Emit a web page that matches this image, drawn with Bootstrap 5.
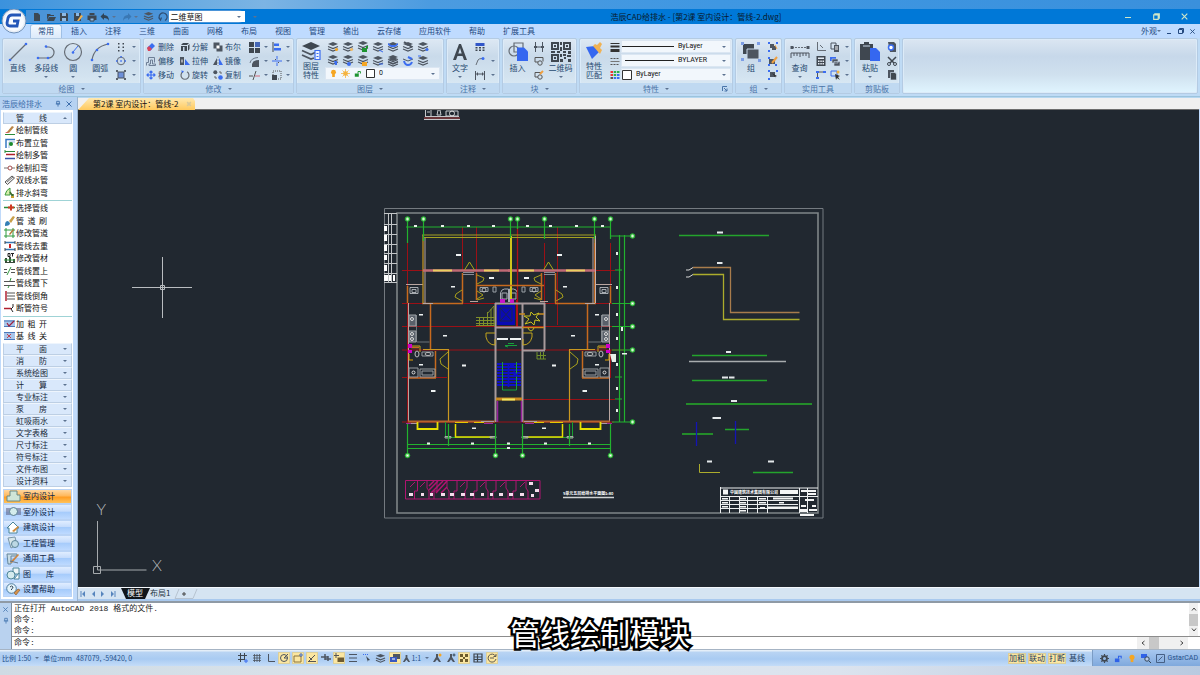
<!DOCTYPE html>
<html lang="zh-CN">
<head>
<meta charset="utf-8">
<meta name="viewport" content="width=device-width, initial-scale=1">
<title>浩辰CAD给排水</title>
<link href="https://cdn.jsdelivr.net/npm/bootstrap@5.3.0/dist/css/bootstrap.min.css" rel="stylesheet">
<style>
body{font-family:"Noto Sans CJK SC","Noto Sans",sans-serif;font-size:8px;line-height:10px;color:#26496f;background:#bfdbff;min-height:100vh;overflow-x:hidden}
svg{display:block;flex:none}
button,select,input{font:inherit;color:inherit}
.tool{background:none;border:0;padding:0;display:flex;align-items:center;justify-content:center;white-space:nowrap;line-height:10px}
.dn{display:inline-block;border:2px solid transparent;border-top-color:#5c7290;border-bottom:0;width:0;height:0;flex:none}
.desk-top{height:9px;background:linear-gradient(90deg,#3b92dd,#5fa6e0 12%,#7cb4e4 22%,#4b9be0 36%,#3f97e2 60%,#3a90dc)}
.desk-bottom{height:9px;background:linear-gradient(90deg,#cfdbe4,#dfe7ee 45%,#dbe3ee 70%,#b9cae0)}
.titlebar{height:15px;background:#0078d7;color:#08182c;padding-right:2px}
.doctitle{left:58%;transform:translateX(-50%);white-space:nowrap}
.quick{height:13px;background:#4b94d8;border-radius:0 7px 7px 0;margin-left:26px;padding-left:4px;width:219px}
.quick .tool{width:14px}
.quick select{width:77px;height:11px;background:#fff;border:0;appearance:none;padding:0 1px;color:#111;line-height:11px}
.wscaret{margin-left:-8px;margin-right:4px}
.winbtns .tool{width:28px;height:15px;color:#cfe6c8}
.logo{left:1px;top:0;z-index:5}
.tabs{height:14px;background:#bfdbff;color:#24497f;padding-left:28px}
.tabs a{display:block;color:inherit;text-decoration:none;padding:1px 9px 0;height:14px;line-height:12px}
.tabs a.active{background:linear-gradient(#f4f9ff,#dceafa);border:1px solid #9fc0e6;border-bottom:0;border-radius:3px 3px 0 0;margin:0 0 0 2px;padding:0 7px}
.ribbon{height:59px;padding:0 2px 2px;gap:2px;background:#bfdbf5;border-bottom:1px solid #9cc4dd}
.panel{flex:none;height:56px;border:1px solid #b4cbe3;border-radius:2px;background:linear-gradient(#dde8f3,#c9daea 32%,#d3e3f0 70%,#dfeef8);overflow:hidden;box-shadow:0 0 0 1px #dcebf8 inset}
.panel.rest{background:linear-gradient(#dbe6f2,#c7d8ea 32%,#cfe0ee 65%,#e0f5ff);flex:1 1 0}
.pbody{height:44px;padding-top:1px}
.ptitle{height:11px;background:#c0d9f1;color:#4a74a8;line-height:10px;gap:6px}
.big{flex-direction:column;justify-content:flex-start;height:42px;gap:1px;padding-top:2px}
.big .dn{margin-top:2px}
.two{gap:0;padding-top:1px}
.lb{display:block;line-height:9px;height:9px}
.rows3{display:grid;grid-template-rows:repeat(3,14px)}
.g2{grid-template-columns:14px 12px}
.mod{grid-template-columns:34px 33px 34px 14px 9px 14px 8px;padding-left:2px}
.mod .lab{justify-content:flex-start;gap:2px}
.lay .tool{width:15px;height:14px}
.lay2 .tool{height:13px}
.box{background:#f2f7fc;border:1px solid #dbe6f2;height:13px;color:#111;font-family:Roboto,"Noto Sans",sans-serif;font-size:7px;line-height:11px}
.box select{appearance:none;background:none;border:0;padding:0;height:11px;line-height:11px;flex:1;min-width:0}
.side{width:78px;flex:none;background:#c0dafa;border-right:1px solid #9bb4cf}
.shead{height:13px;color:#3d6eac;padding:0 4px 0 2px;background:#b6d2f2}
.sbody{background:#fff;margin:0 4px 2px 1px;padding:2px 1px 2px 2px;flex:1}
.sbody button{border:0;background:none;color:#111;padding:0;display:flex;align-items:center;text-align:left;white-space:nowrap}
.sbody .it{flex:1 1 12px;min-height:12px;line-height:12px;padding-left:1px}
.sbody .hd{flex:0 0 12px;background:#d9e8fb;border:1px solid #bdcfe4;border-top-color:#eef5fd;padding:0 4px 0 12px;justify-content:space-between;line-height:10px;color:#182838}
.sbody .hd.last{margin-bottom:2px}
.sbody .cat{flex:1 1 15px;min-height:15px;background:linear-gradient(#e0edff,#c5dcfc 45%,#a5cbfb 50%,#bedaff);border:1px solid #b9d3f5;padding-left:2px;gap:1px;color:#10284c}
.sbody .cat.active{background:linear-gradient(#ffd7a0,#ffb85c 45%,#ff9d23 55%,#ffc25a)}
.up{border-top:0;border-bottom:2px solid #5c7290}
.wd{width:31px;display:inline-block;text-align:justify;text-align-last:justify}
.sep{flex:0 0 1px;background:#9fd3d6;margin:1px 0}
.docbar{height:12px;background:#f0f0f0;border-top:1px solid #b7d7f0}
.doctab{height:12px;width:117px;background:linear-gradient(#ffe9b0,#ffc95d);clip-path:polygon(0 100%,11px 0,115px 0,117px 3px,117px 100%);color:#111;padding-left:15px;gap:8px}
.canvas{flex:1 1 0;min-height:0;background:#212830;overflow:hidden;border-top:1px solid #6d6d6d;margin-right:1px}
.canvas svg{width:100%;height:100%}
.laybar{height:14px;background:#d5e4f2;border-top:1px solid #f4f8fc;border-bottom:2px solid #a9c9ee;color:#26343f}
.laybar .tool{width:10px;color:#5785bd;height:11px}
.laytab{height:11px;text-decoration:none;color:#26343f;line-height:10px}
.laytab.active{background:#10151a;color:#fff;clip-path:polygon(0 0,100% 0,24px 100%,5px 100%);width:29px;padding:0 6px;margin-left:3px}
.cmd{background:#fff;border-top:2px solid #8f9aa5;color:#222;font-family:"Liberation Mono","Noto Sans CJK SC",monospace;font-size:8px}
.cmdgrip{width:12px;background:#b9d2ef;border-right:1px solid #7f8d9c;color:#4d7db5;padding-top:3px;gap:4px}
.cmd .logline{height:11px;line-height:11px;padding-left:2px}
.cmdin{border-top:1px solid #8c8c8c;height:13px;padding-left:2px}
.cmdin input{border:0;outline:0;height:11px;padding:0;min-width:0}
.sb{background:#f0f0f0;color:#444}
.vsb{width:9px;margin-right:2px}
.hsb{width:51px;margin-right:12px}
.thumb{background:#c8c8c8}
.status{height:17px;background:linear-gradient(#e4eef8 0 1px,#b9d4f3 2px,#a9cbf2 9px,#c4dcf8);border-top:1px solid #a6b4c4;font-size:7px;color:#24508a}
.status .txt{width:233px;padding-left:2px;gap:4px}
.stools{width:265px}
.stools .tool{height:12px;min-width:12px}
.stools .on,.tog.on{background:#fbe6a0;box-shadow:0 0 0 1px #dbcf9c inset}
.togs{gap:2px;margin-right:6px}
.tog{font-size:8px;width:18px;height:11px;color:#26405f}
.sright{background:linear-gradient(#a8c8ef,#7fa9dd);border-left:1px solid #7b9cc4;width:108px;padding:0 2px 0 4px}
.sright .tool{width:14px}
.brandname{font-family:Roboto,sans-serif}
.caption{left:0;right:0;bottom:26px;font-size:30px;line-height:34px;color:#fff;-webkit-text-stroke:5px #000;paint-order:stroke fill;text-align:center;pointer-events:none;font-weight:400}
</style>
</head>
<body class="d-flex flex-column position-relative">

<svg width="0" height="0" class="position-absolute" aria-hidden="true">
<defs>
<symbol id="layer" viewBox="0 0 12 12"><path d="M1 3 6 1l5 2-5 2z" fill="#4d5560"/><path d="M1 5.500 6 7.500l5-2M1 8 6 10l5-2" fill="none" stroke="#4d5560" stroke-width="1.200"/></symbol>
<symbol id="person" viewBox="0 0 10 10"><path d="M4 1h2v3l3 5H7L5 6.500 3 9H1l3-5z" fill="#4d5560"/></symbol>
<symbol id="win" viewBox="0 0 8 8"><path d="M2.500 2.500v-1h4v4h-1M1.500 2.500h4v4h-4z" fill="none" stroke="currentColor"/></symbol>
<symbol id="ex" viewBox="0 0 8 8"><path d="M1.500 1.500l5 5M6.500 1.500l-5 5" fill="none" stroke="currentColor"/></symbol>
<symbol id="pin" viewBox="0 0 6 8"><path d="M1.500 1.500h3v3h-3zM.5 4.500h5M3 5v2.500" fill="none" stroke="currentColor"/></symbol>
<symbol id="lock" viewBox="0 0 10 10"><path d="M1 5h5v4H1z" fill="currentColor"/><path d="M5 5V2.500h3V5" fill="none" stroke="currentColor" stroke-width="1.200"/></symbol>
<symbol id="bulb" viewBox="0 0 8 10"><circle cx="4" cy="3.500" r="2.800" fill="#f5a623"/><path d="M2.500 5h3v4h-3z" fill="#f5a623"/></symbol>
</defs>
</svg>

<div class="desk-top"></div>

<header class="titlebar d-flex align-items-center position-relative">
  <svg class="logo position-absolute" width="26" height="26" viewBox="0 0 26 26"><circle cx="13" cy="12" r="12" fill="#e8eef6" stroke="#6e8fb8"/><circle cx="13" cy="12" r="10" fill="#f9fbff"/><path d="M20 6H11Q8 6 7 9l-1 5q0 3 3 3h7l1-5h-5" fill="none" stroke="#2356b8" stroke-width="2.800"/></svg>
  <div class="quick d-flex align-items-center">
    <button class="tool" aria-label="新建"><svg width="10" height="10" viewBox="0 0 10 10"><path d="M2 1h4l2 2v6H2z" fill="#3c4752"/></svg></button>
    <button class="tool" aria-label="打开"><svg width="10" height="10" viewBox="0 0 10 10"><path d="M1 2h3l1 1h3v1H3L1 8z M3 5h7L8 9H1z" fill="#3c4752"/></svg></button>
    <button class="tool" aria-label="保存"><svg width="10" height="10" viewBox="0 0 10 10"><path d="M1 1h7l1 1v7H1z" fill="#3c4752"/><path d="M3 1h4v3H3zM3 6h4v3H3z" fill="#8db9e4"/></svg></button>
    <button class="tool" aria-label="另存为"><svg width="10" height="10" viewBox="0 0 10 10"><path d="M1 1h7v8H1z" fill="#3c4752"/><path d="M3 1h3v3H3z" fill="#8db9e4"/><path d="M4 9l4-6 2 1-4 5z" fill="#f0b04c"/></svg></button>
    <button class="tool" aria-label="打印"><svg width="10" height="10" viewBox="0 0 10 10"><path d="M2.500 1h5v2h-5zM.5 3.500h9V8h-9z" fill="#3c4752"/><path d="M3 6h4v3H3z" fill="#8db9e4" stroke="#3c4752"/></svg></button>
    <button class="tool" aria-label="撤销"><svg width="10" height="10" viewBox="0 0 10 10"><path d="M4 1v2q5 0 5 6Q8 6 4 6v2L.5 4.500z" fill="#2f4356"/></svg></button>
    <i class="dn me-1"></i>
    <button class="tool" aria-label="重做"><svg width="10" height="10" viewBox="0 0 10 10"><path d="M6 1v2Q1 3 1 9q1-3 5-3v2l3.500-3.500z" fill="#3a78b4"/></svg></button>
    <i class="dn me-1"></i>
    <button class="tool" aria-label="图层"><svg width="11" height="11"><use href="#layer"/></svg></button>
    <button class="tool" aria-label="刷新"><svg width="10" height="10" viewBox="0 0 10 10"><path d="M2.500 8A4 4 0 1 1 7 8.500M.5 5.500l2 2.500 1-2.500" fill="none" stroke="#2d4d73" stroke-width="1.200"/></svg></button>
    <select aria-label="工作空间"><option>二维草图</option></select><i class="dn wscaret"></i>
  </div>
  <i class="dn ms-2"></i>
  <div class="doctitle position-absolute">浩辰CAD给排水 - [第2课 室内设计：管线-2.dwg]</div>
  <div class="winbtns d-flex ms-auto">
    <button class="tool" aria-label="最小化"><svg width="8" height="8" viewBox="0 0 8 8"><path d="M1 4.500h6" stroke="currentColor"/></svg></button>
    <button class="tool" aria-label="还原"><svg width="9" height="9"><use href="#win"/></svg></button>
    <button class="tool" aria-label="关闭"><svg width="9" height="9"><use href="#ex"/></svg></button>
  </div>
</header>

<nav class="tabs d-flex align-items-center">
  <a href="#" class="active">常用</a><a href="#">插入</a><a href="#">注释</a><a href="#">三维</a><a href="#">曲面</a><a href="#">网格</a><a href="#">布局</a><a href="#">视图</a><a href="#">管理</a><a href="#">输出</a><a href="#">云存储</a><a href="#">应用软件</a><a href="#">帮助</a><a href="#">扩展工具</a>
  <div class="d-flex ms-auto align-items-center gap-1 pe-1">
    <button class="tool">外观<i class="dn"></i></button>
    <button class="tool" aria-label="最小化文档"><svg width="8" height="8" viewBox="0 0 8 8"><path d="M2 6.500h4" stroke="currentColor"/></svg></button>
    <button class="tool" aria-label="还原文档"><svg width="8" height="8"><use href="#win"/></svg></button>
    <button class="tool" aria-label="关闭文档"><svg width="7" height="7"><use href="#ex"/></svg></button>
  </div>
</nav>

<section class="ribbon d-flex">
  <div class="panel" style="width:139px">
    <div class="pbody d-flex">
      <button class="tool big" style="width:30px"><svg width="20" height="20" viewBox="0 0 20 20"><path d="M2 18 18 2" stroke="#666d76" stroke-width="1.200"/><circle cx="2" cy="18" r="1.300" fill="#3b6df0"/><circle cx="18" cy="2" r="1.300" fill="#3b6df0"/></svg>直线</button>
      <button class="tool big" style="width:28px"><svg width="20" height="20" viewBox="0 0 20 20"><path d="M2 16h10a5 5 0 0 0 1-11h-3" fill="none" stroke="#666d76" stroke-width="1.200"/><circle cx="2" cy="16" r="1.300" fill="#3b6df0"/><circle cx="12" cy="16" r="1.300" fill="#3b6df0"/><circle cx="10" cy="4.500" r="1.300" fill="#3b6df0"/></svg>多段线<i class="dn"></i></button>
      <button class="tool big" style="width:27px"><svg width="20" height="20" viewBox="0 0 20 20"><circle cx="10" cy="10" r="8.500" fill="none" stroke="#666d76" stroke-width="1.200"/><path d="M10 10l5-6" stroke="#3b6df0"/><circle cx="10" cy="10.500" r="1.300" fill="#3b6df0"/></svg>圆<i class="dn"></i></button>
      <button class="tool big" style="width:28px"><svg width="20" height="20" viewBox="0 0 20 20"><path d="M2 18Q4 5 18 2" fill="none" stroke="#666d76" stroke-width="1.200"/><circle cx="2" cy="18" r="1.300" fill="#3b6df0"/><circle cx="7" cy="8" r="1.300" fill="#3b6df0"/><circle cx="18" cy="2" r="1.300" fill="#3b6df0"/></svg>圆弧<i class="dn"></i></button>
      <div class="rows3 g2">
        <button class="tool" aria-label="点"><svg width="10" height="10" viewBox="0 0 10 10"><path d="M2 1h1.500v1.500H2zM6.500 1H8v1.500H6.500zM2 4.500h1.500V6H2zM6.500 4.500H8V6H6.500zM2 8h1.500v1.500H2zM6.500 8H8v1.500H6.500z" fill="#3f4750"/></svg></button><button class="tool" aria-label="更多点"><i class="dn"></i></button>
        <button class="tool" aria-label="椭圆"><svg width="10" height="10" viewBox="0 0 10 10"><circle cx="5" cy="5" r="3.800" fill="none" stroke="#666d76"/><path d="M4.300 4.300h1.500v1.500H4.300zM0 4.300h1.500v1.500H0zM8.500 4.300H10v1.500H8.500zM4.300 0h1.500v1.500H4.300z" fill="#3b6df0"/></svg></button><button class="tool" aria-label="更多椭圆"><i class="dn"></i></button>
        <button class="tool" aria-label="填充"><svg width="10" height="10" viewBox="0 0 10 10"><path d="M2 2h6v6H2z" fill="#6d8fd8" stroke="#4d5560"/><path d="M0 0h2v2H0zM8 0h2v2H8zM0 8h2v2H0zM8 8h2v2H8z" fill="#5b626b"/></svg></button><button class="tool" aria-label="更多填充"><i class="dn"></i></button>
      </div>
    </div>
    <div class="ptitle d-flex align-items-center justify-content-center">绘图<i class="dn"></i></div>
  </div>

  <div class="panel" style="width:151px">
    <div class="pbody"><div class="rows3 mod">
      <button class="tool lab"><svg width="10" height="10" viewBox="0 0 10 10"><path d="M1 6l5-5 3 3-5 5z" fill="#3b6df0"/><path d="M1 6l2-2 3 3-2 2H2z" fill="#d9465c"/></svg>删除</button>
      <button class="tool lab"><svg width="10" height="10" viewBox="0 0 10 10"><path d="M1 3l2-2h6l-2 2zM1 4h6v5H1zM8 3.500l1.500-1.500v5L8 9z" fill="#3f4750"/><path d="M3 5h1.500v4H3z" fill="#c9d9ea"/></svg>分解</button>
      <button class="tool lab"><svg width="10" height="10" viewBox="0 0 10 10"><path d="M.5.500h6v6h-6z" fill="#4d5560"/><path d="M3.500 3.500h6v6h-6z" fill="#4d5560"/><path d="M3.500 3.500h3v3h-3z" fill="#fff"/></svg>布尔</button>
      <button class="tool" aria-label="阵列"><svg width="11" height="11" viewBox="0 0 11 11"><path d="M0 0h5v5H0zM6 6h5v5H6zM0 6h5v5H0z" fill="#3f4750"/><path d="M6 0h5v5H6z" fill="#4668b8"/></svg></button><button class="tool" aria-label="更多阵列"><i class="dn"></i></button>
      <button class="tool" aria-label="对齐"><svg width="10" height="10" viewBox="0 0 10 10"><path d="M1 0v10" stroke="#3f4750"/><path d="M2 1.500h5V4H2zM2 6h7v2.500H2z" fill="#3b6df0"/></svg></button><button class="tool" aria-label="更多对齐"><i class="dn"></i></button>
      <button class="tool lab"><svg width="10" height="10" viewBox="0 0 10 10"><path d="M.5 9.500V6.500h2v-5h6v5M3 9.500V8h1.500V4h2v4h3v1.500z" fill="none" stroke="#6e7f96"/></svg>偏移</button>
      <button class="tool lab"><svg width="10" height="10" viewBox="0 0 10 10"><path d="M0 1h4v8H0z" fill="#4d5560"/><path d="M1.500 3.500h1v3h-1z" fill="#fff"/><path d="M5 3l5 6H5z" fill="#3b6df0"/></svg>拉伸</button>
      <button class="tool lab"><svg width="10" height="10" viewBox="0 0 10 10"><path d="M4 2v7H0z" fill="#4d5560"/><path d="M5 0v10" stroke="#8a96a5" stroke-dasharray="2 1"/><path d="M6 2v7h4z" fill="#3b6df0"/></svg>镜像</button>
      <button class="tool" aria-label="圆角"><svg width="11" height="11" viewBox="0 0 11 11"><path d="M3 11V8q1-4 7-4v7z" fill="#4d5560"/><path d="M1 7Q2 2 9 1.500" stroke="#6a7686" fill="none"/></svg></button><button class="tool" aria-label="更多圆角"><i class="dn"></i></button>
      <button class="tool" aria-label="打断"><svg width="10" height="10" viewBox="0 0 10 10"><path d="M5 0v3.500M5 6.500V10M0 5h10" stroke="#3b6df0"/><path d="M3 3l1 1M7 7l-1-1" stroke="#555"/></svg></button><button class="tool" aria-label="更多打断"><i class="dn"></i></button>
      <button class="tool lab"><svg width="10" height="10" viewBox="0 0 10 10"><path d="M5 1v8M1 5h8M3.500 2.500 5 1l1.500 1.500M3.500 7.500 5 9l1.500-1.500M2.500 3.500 1 5l1.500 1.500M7.500 3.500 9 5 7.500 6.500" fill="none" stroke="#3b6df0" stroke-width="1.200"/></svg>移动</button>
      <button class="tool lab"><svg width="10" height="10" viewBox="0 0 10 10"><path d="M3 1.800A4 4 0 1 0 7 1.800" fill="none" stroke="#666d76" stroke-width="1.200"/><path d="M1 .5l3 .5-1.500 2z" fill="#3b6df0"/></svg>旋转</button>
      <button class="tool lab"><svg width="10" height="10" viewBox="0 0 10 10"><circle cx="2.300" cy="2.300" r="2" fill="#4d5560"/><circle cx="7.500" cy="7.500" r="2.300" fill="#3b6df0"/><path d="M6 2h2v2M2 6v2h2" fill="none" stroke="#666"/></svg>复制</button>
      <button class="tool" aria-label="修剪"><svg width="11" height="11" viewBox="0 0 11 11"><path d="M0 6h4M4 10l3-9" stroke="#555" fill="none"/><path d="M6 6h5" stroke="#d46b78"/></svg></button><button class="tool" aria-label="更多修剪"><i class="dn"></i></button>
      <button class="tool" aria-label="缩放"><svg width="10" height="10" viewBox="0 0 10 10"><path d="M1 1h8v8H1z" fill="none" stroke="#555" stroke-dasharray="1 1"/><path d="M0 5h5v5H0z" fill="#3f4750"/></svg></button><button class="tool" aria-label="更多缩放"><i class="dn"></i></button>
    </div></div>
    <div class="ptitle d-flex align-items-center justify-content-center">修改<i class="dn"></i></div>
  </div>

  <div class="panel" style="width:148px">
    <div class="pbody d-flex">
      <button class="tool big two" style="width:28px"><svg width="22" height="20" viewBox="0 0 22 20"><path d="M2 5l9-4 9 4-9 4z" fill="#3f4750"/><path d="M2 9.500l9 4 4-2M2 14l9 4 3-1" fill="none" stroke="#4d5560" stroke-width="1.800"/><path d="M15 9.500h5v9h-5z" fill="#eaf2ff" stroke="#3b6df0" stroke-width="1.200"/><path d="M16.500 12.500h2M16.500 15.500h2" stroke="#3b6df0"/></svg><span class="lb">图层</span><span class="lb">特性</span></button>
      <div>
        <div class="d-flex lay">
          <button class="tool" aria-label="关闭图层"><svg width="12" height="12" viewBox="0 0 12 12"><use href="#layer"/><circle cx="9.500" cy="8.500" r="1.500" fill="#f5a623"/></svg></button>
          <button class="tool" aria-label="冻结图层"><svg width="12" height="12" viewBox="0 0 12 12"><use href="#layer"/><circle cx="9.500" cy="8.500" r="1.500" fill="#f2bd67"/></svg></button>
          <button class="tool" aria-label="锁定图层"><svg width="12" height="12" viewBox="0 0 12 12"><use href="#layer" y="-1"/><path d="M5 7h5v4H5zM9 7V5h2v2" fill="#1c9430"/></svg></button>
          <button class="tool" aria-label="置为当前"><svg width="12" height="12" viewBox="0 0 12 12"><use href="#layer"/><path d="M7 9l4 2" stroke="#3b6df0"/></svg></button>
          <button class="tool" aria-label="图层合并"><svg width="12" height="12" viewBox="0 0 12 12"><use href="#layer"/><path d="M1 2l3 2h4l3-2v2L8 6H4L1 4z" fill="#3b6df0"/></svg></button>
          <button class="tool" aria-label="图层匹配"><svg width="12" height="12" viewBox="0 0 12 12"><use href="#layer"/><path d="M2 1l8 5" stroke="#4d5560" stroke-width="2"/></svg></button>
          <button class="tool" aria-label="图层浏览"><svg width="12" height="12" viewBox="0 0 12 12"><use href="#layer"/><circle cx="10" cy="8.500" r="1.500" fill="#3b6df0"/></svg></button>
        </div>
        <div class="d-flex lay lay2">
          <button class="tool" aria-label="打开图层"><svg width="12" height="12" viewBox="0 0 12 12"><use href="#layer" y="-1"/><path d="M7 6h3v4H8z" fill="#3b6df0"/></svg></button>
          <button class="tool" aria-label="解冻图层"><svg width="12" height="12" viewBox="0 0 12 12"><use href="#layer" y="-1"/><circle cx="7" cy="9" r="2" fill="#3b6df0"/></svg></button>
          <button class="tool" aria-label="解锁图层"><svg width="12" height="12" viewBox="0 0 12 12"><use href="#layer" y="-1"/><path d="M5 7h5v4H5z" fill="#f5a623"/></svg></button>
          <button class="tool" aria-label="上一图层"><svg width="12" height="12" viewBox="0 0 12 12"><use href="#layer"/><path d="M7 9h4" stroke="#3b6df0"/></svg></button>
          <button class="tool" aria-label="图层漫游"><svg width="12" height="12" viewBox="0 0 12 12"><use href="#layer" y="-1"/><use href="#layer" y="1"/></svg></button>
          <button class="tool" aria-label="图层删除"><svg width="12" height="12" viewBox="0 0 12 12"><path d="M1 4l5 2 5-2" fill="none" stroke="#4d5560"/><path d="M2 6q1 4 4 4t4-3M6 2l4 2" fill="none" stroke="#3b6df0" stroke-width="2"/></svg></button>
          <button class="tool" aria-label="图层状态"><svg width="12" height="12" viewBox="0 0 12 12"><use href="#layer"/><path d="M1 1h3" stroke="#3b6df0"/></svg></button>
        </div>
        <div class="box d-flex align-items-center gap-1 ps-1 pe-1" style="width:115px">
          <svg width="7" height="9"><use href="#bulb"/></svg>
          <svg width="9" height="9" viewBox="0 0 9 9"><circle cx="4.500" cy="4.500" r="2.300" fill="#f5a623"/><path d="M4.500 0v9M0 4.500h9M1.500 1.500l6 6M7.500 1.500l-6 6" stroke="#f5b645" stroke-width=".8"/></svg>
          <svg width="8" height="9" style="color:#1c9430"><use href="#lock"/></svg>
          <svg width="9" height="9" viewBox="0 0 9 9"><path d="M.5.500h8v8h-8z" fill="#fff" stroke="#333"/></svg>
          <select aria-label="当前图层"><option>0</option></select><i class="dn"></i>
        </div>
      </div>
    </div>
    <div class="ptitle d-flex align-items-center justify-content-center">图层<i class="dn"></i></div>
  </div>

  <div class="panel" style="width:54px">
    <div class="pbody d-flex">
      <button class="tool big" style="width:28px"><svg width="16" height="20" viewBox="0 0 16 20"><path d="M1 18 7 2h2l6 16h-3l-1.500-4h-5L4 18zM6.300 11.500h3.400L8 6z" fill="#3f4750"/></svg>文字<i class="dn"></i></button>
      <div class="rows3 g2">
        <button class="tool" aria-label="表格"><svg width="10" height="10" viewBox="0 0 10 10"><path d="M.5 1h9v3h-9z" fill="#3156c8"/><path d="M.5 5h2v1.500h-2zM4 5h2v1.500H4zM7.500 5h2v1.500h-2zM.5 7.500h2V9h-2zM4 7.500h2V9H4zM7.500 7.500h2V9h-2z" fill="#3f4750"/></svg></button><span></span>
        <button class="tool" aria-label="引线"><svg width="10" height="10" viewBox="0 0 10 10"><path d="M1 9l2-5q1-1.500 4-1.500" fill="none" stroke="#666d76"/><circle cx="8" cy="2.500" r="1.500" fill="#3b6df0"/></svg></button><button class="tool" aria-label="更多引线"><i class="dn"></i></button>
        <button class="tool" aria-label="标注"><svg width="10" height="10" viewBox="0 0 10 10"><path d="M.5 1v9M9.500 1v9M1 4h8" stroke="#4d5560"/><path d="M2.500 2.500v3M7.500 2.500v3" stroke="#4d5560"/></svg></button><button class="tool" aria-label="更多标注"><i class="dn"></i></button>
      </div>
    </div>
    <div class="ptitle d-flex align-items-center justify-content-center">注释<i class="dn"></i></div>
  </div>

  <div class="panel" style="width:75px">
    <div class="pbody d-flex">
      <button class="tool big" style="width:29px"><svg width="20" height="20" viewBox="0 0 20 20"><circle cx="6" cy="9" r="5" fill="none" stroke="#666d76" stroke-width="1.200"/><path d="M6 1h9v9H6z" fill="none" stroke="#666d76" stroke-width="1.200"/><path d="M9 5.500h7l4 4V19H9z" fill="#3567f0"/></svg>插入</button>
      <div class="rows3" style="width:13px">
        <button class="tool" aria-label="创建块"><svg width="10" height="10" viewBox="0 0 10 10"><path d="M1.500 0v10M8.500 0v10M3 5h4" stroke="#4d5560"/><path d="M0 4h3v2H0zM7 4h3v2H7z" fill="#4d5560"/></svg></button>
        <button class="tool" aria-label="编辑块"><svg width="10" height="10" viewBox="0 0 10 10"><path d="M1 1.500h8v4M1 1.500V6h3" fill="none" stroke="#555"/><circle cx="6" cy="7" r="2.200" fill="none" stroke="#555"/></svg></button>
        <button class="tool" aria-label="块属性"><svg width="10" height="10" viewBox="0 0 10 10"><path d="M1 2.500h6M1 2.500V7h3" fill="none" stroke="#555"/><circle cx="6" cy="7" r="2.200" fill="none" stroke="#555"/><path d="M6 4l3-3" stroke="#f0a040" stroke-width="2"/></svg></button>
      </div>
      <button class="tool big" style="width:31px"><svg width="20" height="20" viewBox="0 0 20 20"><path d="M1 1h6v6H1zM13 1h6v6h-6zM1 13h6v6H1z" fill="none" stroke="#3f4750" stroke-width="2"/><path d="M3 3h2v2H3zM15 3h2v2h-2zM3 15h2v2H3zM9 0h2v3H9zM9 5h2v4H9zM0 9h4v2H0zM6 9h3v2H6zM12 9h3v2h-3zM17 9h3v3h-3zM9 12h2v3H9zM9 17h3v3H9zM12 12h3v2h-3zM13 15h2v2h-2zM16 13h4v2h-4zM17 17h3v3h-3z" fill="#3f4750"/></svg>二维码<i class="dn"></i></button>
    </div>
    <div class="ptitle d-flex align-items-center justify-content-center">块<i class="dn"></i></div>
  </div>

  <div class="panel" style="width:154px">
    <div class="pbody d-flex">
      <button class="tool big two" style="width:28px"><svg width="20" height="20" viewBox="0 0 20 20"><path d="M2 6l9-1 4 6-7 7z" fill="#3567f0"/><path d="M9 5l2-2 2 1 3-3 2 2-2 4 2 2-2 4z" fill="#f0b254"/></svg><span class="lb">特性</span><span class="lb">匹配</span></button>
      <div class="rows3" style="width:13px">
        <button class="tool" aria-label="线宽"><svg width="10" height="10" viewBox="0 0 10 10"><path d="M.5 1.500h9" stroke="#333"/><path d="M.5 4.500h9" stroke="#333" stroke-width="2"/><path d="M.5 8.500h9" stroke="#333" stroke-width="3"/></svg></button>
        <button class="tool" aria-label="线型"><svg width="10" height="10" viewBox="0 0 10 10"><path d="M.5 2.500h9M.5 8.500h9" stroke="#555" stroke-dasharray="2 1"/><path d="M.5 5.500h9" stroke="#777"/></svg></button>
        <button class="tool" aria-label="颜色"><svg width="10" height="10" viewBox="0 0 10 10"><path d="M.5 1h2.500v2H.500zM.5 4h2.500v2H.500z" fill="#e33"/><path d="M3.700 1h2.500v2H3.700zM7 1h2.500v2H7zM3.700 4h2.500v2H3.700z" fill="#2eae4a"/><path d="M.5 7h2.500v2H.500z" fill="#555"/><path d="M3.700 7h2.500v2H3.700zM7 4h2.500v2H7zM7 7h2.500v2H7z" fill="#3b6df0"/></svg></button>
      </div>
      <div class="rows3" style="width:110px">
        <div class="box d-flex align-items-center pe-1 gap-1"><svg width="52" height="3" viewBox="0 0 52 3"><path d="M0 1.500h52" stroke="#222"/></svg><select aria-label="线宽值"><option>ByLayer</option></select><i class="dn"></i></div>
        <div class="box d-flex align-items-center pe-1 gap-1"><svg width="52" height="3" viewBox="0 0 52 3"><path d="M3 1.500h49" stroke="#222"/></svg><select aria-label="线型值"><option>BYLAYER</option></select><i class="dn"></i></div>
        <div class="box d-flex align-items-center pe-1"><svg width="10" height="10" viewBox="0 0 10 10"><path d="M.5.500h9v9h-9z" fill="#fff" stroke="#333"/></svg><select class="ps-1" aria-label="颜色值"><option>ByLayer</option></select><i class="dn"></i></div>
      </div>
    </div>
    <div class="ptitle d-flex align-items-center justify-content-center position-relative">特性<i class="dn"></i><svg class="position-absolute end-0 me-1" width="6" height="6" viewBox="0 0 6 6"><path d="M.5 5V.5H5M2 2l3 3M5 2.500V5H2.500" fill="none" stroke="#4a74a8"/></svg></div>
  </div>

  <div class="panel" style="width:47px">
    <div class="pbody d-flex">
      <button class="tool big" style="width:30px"><svg width="20" height="20" viewBox="0 0 20 20"><path d="M2 2h11v10H2z" fill="#3f4750"/><path d="M6 7h12v10H6z" fill="#4d5560" stroke="#c9d9ea"/><path d="M0 0h3v3H0zM16 0h3v3h-3zM0 16h3v3H0zM17 17h3v3h-3z" fill="#7d9ee6"/></svg>组</button>
      <div class="rows3" style="width:13px">
        <button class="tool" aria-label="取消编组"><svg width="10" height="10" viewBox="0 0 10 10"><path d="M2 2h4v4H2zM4 4h4v4H4z" fill="#4d5560"/><path d="M0 0h2v2H0zM8 0h2v2H8zM0 8h2v2H0z" fill="#3b6df0"/><path d="M7 3l2 4" stroke="#f0a040"/></svg></button>
        <button class="tool" aria-label="组编辑"><svg width="10" height="10" viewBox="0 0 10 10"><path d="M1 3h6v5H1z" fill="#4d5560"/><path d="M0 1h2v2H0zM0 8h2v2H0zM7 8h2v2H7z" fill="#3b6df0"/><path d="M4 7l5-6" stroke="#f0a040" stroke-width="2"/></svg></button>
        <button class="tool" aria-label="组选择"><svg width="10" height="10" viewBox="0 0 10 10"><path d="M2 2h5v5H2z" fill="#4d5560"/><path d="M0 0h2v2H0zM8 0h2v2H8zM0 8h2v2H0z" fill="#3b6df0"/><path d="M4 3l5 3-2 1 2 3z" fill="#333"/></svg></button>
      </div>
    </div>
    <div class="ptitle d-flex align-items-center justify-content-center">组<i class="dn"></i></div>
  </div>

  <div class="panel" style="width:68px">
    <div class="pbody d-flex">
      <button class="tool big" style="width:29px"><svg width="20" height="20" viewBox="0 0 20 20"><path d="M2 5.500h16" stroke="#666d76" stroke-dasharray="2 1"/><path d="M.5 4h3v3h-3zM16.500 4h3v3h-3z" fill="#4d5560"/><path d="M1 16v-5h18v5M4 11v3M7 11v3M10 11v4M13 11v3M16 11v3" fill="none" stroke="#4d5560"/></svg>查询<i class="dn"></i></button>
      <div class="rows3" style="grid-template-columns:14px 14px 9px">
        <button class="tool" aria-label="坐标"><svg width="10" height="10" viewBox="0 0 10 10"><path d="M1.500 0v8.500H10M4 3l3 3" fill="none" stroke="#666d76"/></svg></button><button class="tool" aria-label="列表"><svg width="10" height="10" viewBox="0 0 10 10"><path d="M1 1h5v6H1z" fill="none" stroke="#4d5560"/><path d="M4 3h5v7H4z" fill="#4d5560"/><path d="M5 5h3M5 7h3" stroke="#fff"/></svg></button><button class="tool" aria-label="更多列表"><i class="dn"></i></button>
        <button class="tool" aria-label="计算器"><svg width="10" height="10" viewBox="0 0 10 10"><path d="M.5 0h9v10h-9z" fill="#3f4750"/><path d="M2 1.500h6v1.500H2zM2 4.500h1.500V6H2zM4.300 4.500h1.500V6H4.300zM6.500 4.500H8V6H6.500zM2 7h1.500v1.500H2zM4.300 7h1.500v1.500H4.300zM6.500 7H8v1.500H6.500z" fill="#e6edf6"/></svg></button><button class="tool" aria-label="显示顺序"><svg width="10" height="10" viewBox="0 0 10 10"><path d="M0 1h6v4H0z" fill="#3b6df0"/><path d="M2 3h6v4H2zM4 5.500h6V10H4z" fill="#4d5560" stroke="#c9d9ea" stroke-width=".6"/></svg></button><button class="tool" aria-label="更多顺序"><i class="dn"></i></button>
        <button class="tool" aria-label="点样式"><svg width="10" height="10" viewBox="0 0 10 10"><path d="M1.500 9V2H9" fill="none" stroke="#555"/><path d="M0 1h3v2H0zM7 1h3v2H7zM0 7h3v2H0z" fill="#3b6df0"/></svg></button><button class="tool" aria-label="快速选择"><svg width="10" height="10" viewBox="0 0 10 10"><path d="M1 1h6v5H1z" fill="none" stroke="#3b6df0"/><path d="M5 4l5 2-2 1 2 3-3-2-1 2z" fill="#333"/><circle cx="8" cy="2" r="1.500" fill="#f0b040"/></svg></button><button class="tool" aria-label="更多选择"><i class="dn"></i></button>
      </div>
    </div>
    <div class="ptitle d-flex align-items-center justify-content-center">实用工具</div>
  </div>

  <div class="panel" style="width:46px">
    <div class="pbody d-flex">
      <button class="tool big" style="width:30px"><svg width="20" height="20" viewBox="0 0 20 20"><path d="M0 2h4V0h5v2h4v16H0z" fill="#3f4750"/><path d="M3 4h7" stroke="#c9d9ea"/><path d="M10 6h6l4 4v9H10z" fill="#3567f0"/></svg>粘贴<i class="dn"></i></button>
      <div class="rows3" style="width:13px">
        <button class="tool" aria-label="复制链接"><svg width="10" height="10" viewBox="0 0 10 10"><path d="M1 0h6l2 2v8H3z" fill="#4d5560"/><circle cx="4" cy="5.500" r="2.500" fill="#fff" stroke="#3b6df0" stroke-width="1.500"/></svg></button>
        <button class="tool" aria-label="剪切"><svg width="10" height="10" viewBox="0 0 10 10"><path d="M1 1l6 6M9 1L3 7" stroke="#3f4750" stroke-width="1.500"/><circle cx="2" cy="8" r="1.500" fill="none" stroke="#3f4750"/><circle cx="8" cy="8" r="1.500" fill="none" stroke="#3f4750"/></svg></button>
        <button class="tool" aria-label="复制到剪贴板"><svg width="10" height="10" viewBox="0 0 10 10"><path d="M1 0h6v8H1z" fill="#4d5560"/><path d="M3.500 2.500H8L9.500 4v6h-6z" fill="#3f4750" stroke="#c9d9ea" stroke-width=".7"/></svg></button>
      </div>
    </div>
    <div class="ptitle d-flex align-items-center justify-content-center">剪贴板</div>
  </div>
  <div class="panel rest"></div>
</section>

<main class="d-flex flex-grow-1">
  <aside class="side d-flex flex-column">
    <div class="shead d-flex align-items-center">浩辰给排水<svg class="ms-auto me-1" width="6" height="7"><use href="#pin"/></svg><svg width="8" height="8"><use href="#ex"/></svg></div>
    <div class="sbody d-flex flex-column">
      <button class="hd"><span class="wd">管 线</span><i class="dn up"></i></button>
      <button class="it"><svg width="12" height="12" viewBox="0 0 12 12"><path d="M1 10.500h10" stroke="#2a8a3a"/><path d="M3 8l5-6 2 1-5 6z" fill="#b98548"/><path d="M1 9l2-1 2 1z" fill="#c33"/></svg>绘制管线</button>
      <button class="it"><svg width="12" height="12" viewBox="0 0 12 12"><path d="M2 11V2.500h9" fill="none" stroke="#3779c4" stroke-width="1.500"/><path d="M5 11V5h6" stroke="#9bbbe0" fill="none"/><circle cx="7" cy="7" r="2" fill="#1b8a2c"/></svg>布置立管</button>
      <button class="it"><svg width="12" height="12" viewBox="0 0 12 12"><path d="M1 2.500h10" stroke="#2a8a3a"/><path d="M2 5.500h9" stroke="#b11f2c" stroke-width="1.500"/><path d="M1 9.500h10" stroke="#3a53a8" stroke-width="1.500"/><path d="M1 1v3" stroke="#2a8a3a"/></svg>绘制多管</button>
      <button class="it"><svg width="12" height="12" viewBox="0 0 12 12"><path d="M0 6h4M8 6h3" stroke="#777"/><circle cx="6" cy="6" r="2" fill="none" stroke="#a34a4a"/></svg>绘制扣弯</button>
      <button class="it"><svg width="12" height="12" viewBox="0 0 12 12"><path d="M1 8l7-6 2.500 2-7 6.500z" fill="#eee" stroke="#555"/><path d="M3 8l6-5" stroke="#777"/></svg>双线水管</button>
      <button class="it"><svg width="12" height="12" viewBox="0 0 12 12"><path d="M1 8q1-5 5-7v7z" fill="#d7efad" stroke="#3d9a3d"/><path d="M6 5l3 5M9 7v4" stroke="#3a6a2a" stroke-width="1.500"/><path d="M7 9h3v2H7z" fill="#c8a030"/></svg>排水斜弯</button>
      <div class="sep"></div>
      <button class="it"><svg width="12" height="12" viewBox="0 0 12 12"><path d="M0 5.500h11" stroke="#2a8a3a" stroke-width="1.500"/><path d="M7 2.500v6M4 5.500h6" stroke="#cf3a20" stroke-width="2"/></svg>选择管线</button>
      <button class="it"><svg width="12" height="12" viewBox="0 0 12 12"><path d="M1 10q0-4 3-4l2 2q0 3-5 3z" fill="#347fb5"/><path d="M5 6l4-5 2 1-4 6z" fill="#c9a04a"/></svg><span class="wd">管 道 刷</span></button>
      <button class="it"><svg width="12" height="12" viewBox="0 0 12 12"><path d="M2 1v10M9 1v10M0 3h11M0 9h11" stroke="#2f9a3f"/><path d="M5 7l4-5 1 1-4 5z" fill="#b27732"/></svg>修改管道</button>
      <button class="it"><svg width="12" height="12" viewBox="0 0 12 12"><path d="M1 2.500h10M1 9.500h10" stroke="#3a77b0" stroke-width="1.500"/><path d="M6 4v4" stroke="#c22" stroke-width="2"/><path d="M1 1v3M11 1v3M1 8v3M11 8v3" stroke="#444"/></svg>管线去重</button>
      <button class="it"><svg width="12" height="12" viewBox="0 0 12 12"><path d="M1 11V6h2v4h2V5h2v5h2V7h2v4z" fill="#3a4a3a"/><path d="M4 1.500h2v3H4zM7 1.500h3M8.500 1.500v3" stroke="#222" fill="none"/><path d="M0 8h11" stroke="#2f9a3f"/></svg>修改管材</button>
      <button class="it"><svg width="12" height="12" viewBox="0 0 12 12"><path d="M0 4.500h3M0 7.500h3M7 4.500h4M7 7.500h4" stroke="#555"/><path d="M3 10l4-8" stroke="#2f9a3f"/></svg>管线置上</button>
      <button class="it"><svg width="12" height="12" viewBox="0 0 12 12"><path d="M0 4.500h11M0 8.500h11" stroke="#555"/><path d="M4 11l1-2M6 4l1-3" stroke="#2f9a3f"/></svg>管线置下</button>
      <button class="it"><svg width="12" height="12" viewBox="0 0 12 12"><path d="M2 1v10" stroke="#b02030" stroke-width="1.500"/><path d="M3 3h8M3 6h8M3 9h8" stroke="#555"/></svg>管线倒角</button>
      <button class="it"><svg width="12" height="12" viewBox="0 0 12 12"><path d="M0 6.500h7" stroke="#b02030" stroke-width="1.500"/><path d="M9 2v3L7 7l2 3" stroke="#222" fill="none"/></svg>断管符号</button>
      <div class="sep"></div>
      <button class="it"><svg width="12" height="12" viewBox="0 0 12 12"><path d="M0 2h11v7H0z" fill="#a9c6ea"/><path d="M0 3h11M0 8.500h11" stroke="#4c78b8"/><path d="M3 5l2 3 5-5" stroke="#a02040" fill="none" stroke-width="1.200"/></svg><span class="wd">加 粗 开</span></button>
      <button class="it"><svg width="12" height="12" viewBox="0 0 12 12"><path d="M0 2h11v8H0z" fill="#a9c6ea"/><path d="M0 2.500h11M0 9.500h11" stroke="#4c78b8"/><path d="M3 4l4 4M7 4L3 8" stroke="#c04050"/></svg><span class="wd">基 线 关</span></button>
      <button class="hd"><span class="wd">平 面</span><i class="dn"></i></button>
      <button class="hd"><span class="wd">消 防</span><i class="dn"></i></button>
      <button class="hd">系统绘图<i class="dn"></i></button>
      <button class="hd"><span class="wd">计 算</span><i class="dn"></i></button>
      <button class="hd">专业标注<i class="dn"></i></button>
      <button class="hd"><span class="wd">泵 房</span><i class="dn"></i></button>
      <button class="hd">虹吸雨水<i class="dn"></i></button>
      <button class="hd">文字表格<i class="dn"></i></button>
      <button class="hd">尺寸标注<i class="dn"></i></button>
      <button class="hd">符号标注<i class="dn"></i></button>
      <button class="hd">文件布图<i class="dn"></i></button>
      <button class="hd last">设计资料<i class="dn"></i></button>
      <button class="cat active"><svg width="16" height="13" viewBox="0 0 16 13"><path d="M4 1h7v4h3v6H1V6h3z" fill="#cfe5d8" stroke="#6b8a86"/></svg>室内设计</button>
      <button class="cat"><svg width="16" height="13" viewBox="0 0 16 13"><path d="M1 3v7M3 3v7M12 3v7M14 3v7" stroke="#557"/><circle cx="7.500" cy="6.500" r="4" fill="#d4ecec" stroke="#5a7f92"/></svg>室外设计</button>
      <button class="cat"><svg width="16" height="13" viewBox="0 0 16 13"><path d="M1 7l6-6 6 6h-2v5H3V7z" fill="#fff" stroke="#4a8496"/><path d="M6 10l6-5 1 1-5 5z" fill="#d08a3a"/></svg>建筑设计</button>
      <button class="cat"><svg width="16" height="13" viewBox="0 0 16 13"><path d="M2 2l7-1 2 8-6 3z" fill="#d7e6ea" stroke="#7a96a8"/><circle cx="9" cy="8" r="3.500" fill="#bcd8e4" stroke="#5d8598"/></svg>工程管理</button>
      <button class="cat"><svg width="16" height="13" viewBox="0 0 16 13"><path d="M1 2h10v2H5v8H2z" fill="#c8dce6" stroke="#65859a"/><path d="M4 10l8-8 1 1-7 8z" fill="#cc8440"/><path d="M4 9l8 2" stroke="#678"/></svg>通用工具</button>
      <button class="cat"><svg width="16" height="13" viewBox="0 0 16 13"><path d="M7 1h6v6H7z" fill="#eef6f8" stroke="#4f8698"/><circle cx="5" cy="8" r="4" fill="#d4ebee" stroke="#4f8698"/><path d="M8 12l5-6v6z" fill="#fff" stroke="#4f8698"/></svg><span class="wd">图 库</span></button>
      <button class="cat"><svg width="16" height="13" viewBox="0 0 16 13"><circle cx="5.500" cy="5.500" r="4.800" fill="#e4f4fb" stroke="#4c7c9e"/><path d="M4 4q1.500-2 3 0 0 1.500-1.500 2v1" fill="none" stroke="#345"/><path d="M8 10l4-4 2 1-4 5z" fill="#d4924c" stroke="#8a5a2a" stroke-width=".6"/></svg>设置帮助</button>
    </div>
  </aside>

  <section class="d-flex flex-column flex-grow-1" style="min-width:0">
    <div class="docbar"><div class="doctab d-flex align-items-center">第2课 室内设计：管线-2<svg width="6" height="6" viewBox="0 0 8 8"><path d="M1.500 1.500l5 5M6.500 1.500l-5 5" stroke="#d8c89a" stroke-width="2"/></svg></div></div>
    <div class="canvas">
      <svg viewBox="78 110 1121 477" preserveAspectRatio="xMinYMin slice" fill="none" role="img" aria-label="管线-2.dwg">
        <defs>
          <g id="bub"><circle r="2.300" fill="#8fe08f" stroke="#1fae2c"/><circle r=".8" fill="#fff"/></g>
          <!-- one flat of the storey; the other is its mirror image -->
          <g id="flat">
            <path d="M407.500 286v17M462.500 273v30M476.500 273v27M430.500 304v45M435.500 351v27M408 378h28M422 303.500h41M411 347.500h8" stroke="#c76a1e" stroke-width="1.500"/>
            <path d="M406 284.500h17M408.500 303v119M425 238v65M423 303.500h10M470 301.500h8" stroke="#b9a6a0"/>
            <path d="M495.500 303v119" stroke="#a79a9c" stroke-width="2"/>
            <path d="M423 349.500h26M448.500 350v72M423 235v68" stroke="#c99820" stroke-width="1.200"/>
            <path d="M408 421.500h87" stroke="#b9622a" stroke-width="2"/><path d="M481 421.500h13M408 423.500h9" stroke="#a99aa6"/>
            <path d="M423 270.500h87" stroke="#c06a74" stroke-width="2.500"/>
            <path d="M433 270.500h19M484 270.500h15" stroke="#e8d060" stroke-width="2"/>
            <path d="M464.500 270l5-8 5 8" stroke="#a8a818"/><path d="M463 272.500h11M463 274.500h11" stroke="#8c8c96"/>
            <path d="M462 290l-6 4-1 3 7 4M477 275l7 3-1 3-6 3M477 300l7-2M477 291l6 4-6 4M448 352l-8 7 1 5 7 5" stroke="#a8a01c"/>
            <path d="M417.500 422v7h20v-7" stroke="#e8e000" stroke-width="1.800"/>
            <path d="M445.500 422v15.500h50" stroke="#16a030"/>
            <path d="M455.500 424v13h37" stroke="#e8e000" stroke-width="1.500"/><path d="M455 422.500h13M474 422.500h10" stroke="#e8c800"/><path d="M445 436.500h6v1.500h-6zM490 436.500h6v1.500h-6z" stroke="#aaa"/>
            <path d="M495 333h-9v4q2 8 9 8v-6M408 346h12v6" stroke="#c2a41c"/>
            <path d="M410 287.500h8v6h-8zM412 289.500h4v3h-4z" stroke="#c8ccd0" stroke-width=".8"/>
            <path d="M416.500 315v27h13" stroke="#6c7278"/><path d="M409 315h7v11h-7zM409 331h7v11h-7z" fill="#59606a" stroke="#a0a4a8"/>
            <circle cx="412" cy="319" r="1.500" stroke="#ddd"/><circle cx="412" cy="334" r="1.500" stroke="#ddd"/><circle cx="412" cy="339" r="1.500" stroke="#ddd"/>
            <path d="M409 368h9v9h-9zM420 369h15v8h-15zM422 371h11v4h-11zM422 352h11v4h-11z" stroke="#989ca0"/>
            <circle cx="413.500" cy="372.500" r="1.500" stroke="#ddd"/><ellipse cx="417" cy="354" rx="2" ry="3" stroke="#bbb"/><ellipse cx="428" cy="354" rx="3" ry="1.500" stroke="#bbb"/>
            <path d="M408 344h4v4h-4zM408 350h4v3h-4z" fill="#d000c8"/>
            <path d="M406 423.500h5M484 423.500h9" stroke="#9c2c9c"/>
            <path d="M409 354v6h4" stroke="#e2a000"/>
            <path d="M480 287.500h8v4h-8zM493 287h3v5h-3z" stroke="#9aa0a6"/><circle cx="484" cy="290" r="2" stroke="#bbb"/>
            <path d="M500.500 302v-9q1-4 4-4h4v13M502 293h5v6h-5z" stroke="#a8acb4"/>
            <g fill="#eef2f2"><path d="M456 254h5v2h-5zM451 286h4v1.500h-4zM489 277h5v2h-5zM419 314h4v1.500h-4zM443 335h4v1.500h-4zM462 364.500h4v2h-4zM431 390h4.500v2H431zM419 364h4v1.500h-4zM472 427.500h4v1.500h-4zM497 338h11v2h-11z"/></g>
          </g>
        </defs>

        <path d="M132 287.500h60M162.500 257v61" stroke="#b9bdc0"/><path d="M160.500 285.500h4v4h-4z" stroke="#b9bdc0"/>
        <path d="M97.500 521v49h49M93.500 566.500h7v7h-7z" stroke="#a6aaad"/>
        <g fill="#b6babd" font-family="Lato, sans-serif" font-weight="300" font-size="16"><text x="96.500" y="515">Y</text><text x="152" y="570.500">X</text></g>

        <path d="M425.500 110v6M431 110v6M425 116.500h34M424 119.500h36" stroke="#c5c8cb"/><path d="M424 118h36" stroke="#b34444"/><path d="M427 112h3M437 115l1-5h2l1 5z M446 111h12v5h-12z" stroke="#c5c8cb"/><circle cx="452" cy="113.500" r="2.500" stroke="#ddd"/>

        <path d="M384.500 208.500h438.500v309.500h-438.500z" stroke="#747a80"/>
        <path d="M397 213h421v300H397z" stroke="#7f8588" stroke-width="1.600"/>
        <path d="M384 213.500h13M384 224.500h13M384 234.500h13M384 244.500h13M384 253.500h13M384 263.500h13M384 273.500h13M384 282.500h13M388.500 213v69M391.500 213v69" stroke="#c3c6c8"/>
        <path d="M384 226h3v5h-3zM384 235h3v6h-3zM384 245h3v6h-3zM384 255h3v5h-3zM384 265h3v6h-3zM384 275h4v6h-4zM389 275h2v6h-2zM393 275h2v6h-2z" fill="#fff"/>

        <path d="M402 270.500h213M402 303.500h222M402 326.500h222M402 350h222M402 377.500h45M522 399.500h93M402 422h212M407.500 243v43M462.500 227v43M476.500 227v60M544.500 243v60M557.500 227v98M594.500 243v60M610.500 243v43M407.500 303v130M610.500 422v11M610.500 350v28" stroke="#9c1016"/>
        <use href="#flat"/>
        <use href="#flat" transform="matrix(-1 0 0 1 1018 0)"/>
        <path d="M517.500 227v76" stroke="#b01018" stroke-width="1.300"/>
        <path d="M517 300v27" stroke="#b01018" stroke-width="2"/>

        <path d="M422 235h174M424 237.500h170" stroke="#a5a022" stroke-width="1.200"/><path d="M595.500 236v67" stroke="#c8b0a8"/><path d="M511 236v66" stroke="#d0c41c" stroke-width="2"/><path d="M476 285.500h68" stroke="#c76a1e" stroke-width="1.500"/>
        <path d="M495 303.500h50M495 327.500h27M544.500 303v47M522 350.500h23" stroke="#a79a9c" stroke-width="2"/>
        <path d="M522 327.500h22M519 314h6M538 314h6" stroke="#c98a20" stroke-width="1.500"/>
        <path d="M497 305h18v20h-18z" fill="#0a0ab4"/><path d="M500 308h12v13h-12zM500 308l12 13M512 308l-12 13" stroke="#1c2450"/>
        <path d="M524 316l5 3-4 5 6-2 3 3 1-5 5 1-4-4 3-4-5 2-3-3-1 4zM528 328q3 6 6 0" stroke="#c8c020"/>
        <path d="M476 317.500h19M476 320.500h19M476 323.500h19M476 325.500h19M479.500 317v9M483.500 317v9M487.500 312v14M487 314l7-8v20M491 309v17" stroke="#7f8f2a"/>
        <path d="M497 364h24M497 367h24M497 370h24M497 373h24M497 376h24M497 379h24M497 382h24M497 385h24M508.500 364v23" stroke="#1010c4" stroke-width="1.800"/>
        <path d="M502.500 362v28h14v-28M505 345.500h12M508 343.500h6M505 346l3 1" stroke="#18a03a"/><path d="M510 366h4M513 372l4 4" stroke="#1010c4" stroke-width="3"/>
        <path d="M537 352v7h9M540.500 352v7M543.500 352v7M537 355.500h9" stroke="#6f8f2a"/>
        <path d="M496 399h26" stroke="#c98a20" stroke-width="3"/><path d="M502 399.500h13" stroke="#f0e860" stroke-width="2"/>
        <path d="M497.500 401v21M521.500 401v21" stroke="#96209c" stroke-width="1.500"/>
        <path d="M500 299h5v4h-5zM510 299h4v4h-4z" fill="#c818c8"/>

        <path d="M406 227h205M407.500 219v24M423.500 219v22M510.500 219v19M517.500 219v10M544.500 219v20M594.500 219v20M610.500 219v20M610 236h20M619.500 235v187M624.500 235v187M612 303.500h18M612 326.500h18M612 350h18M612 422h18M615 270h7M615 377h7M615 399h7" stroke="#22b22e" stroke-width="1.200"/>
        <path d="M407 444.500h203M407 448.500h203M407.500 424v30M448.500 424v22M495.500 424v30M522.500 424v30M569.500 424v22M610.500 424v30" stroke="#22b22e" stroke-width="1.200"/>
        <g><use href="#bub" x="407.500" y="219"/><use href="#bub" x="423.500" y="219"/><use href="#bub" x="510.500" y="219"/><use href="#bub" x="517.500" y="219"/><use href="#bub" x="544.500" y="219"/><use href="#bub" x="594.500" y="219"/><use href="#bub" x="610.500" y="219"/><use href="#bub" x="632.500" y="236"/><use href="#bub" x="632.500" y="303.500"/><use href="#bub" x="632.500" y="326.500"/><use href="#bub" x="632.500" y="350"/><use href="#bub" x="632.500" y="422"/><use href="#bub" x="407.500" y="455.500"/><use href="#bub" x="495.500" y="455.500"/><use href="#bub" x="522.500" y="455.500"/><use href="#bub" x="610.500" y="455.500"/></g>
        <path d="M414 225h3v2h-3zM441 225h3v2h-3zM467 225h3v2h-3zM492 225h3v2h-3zM526 225h3v2h-3zM549 225h3v2h-3zM575 225h3v2h-3zM601 225h3v2h-3zM427 442.500h3v2h-3zM471 442.500h3v2h-3zM507 442.500h3v2h-3zM507 447h3v2h-3zM544 442.500h3v2h-3zM588 442.500h3v2h-3zM616 252h2v3h-2zM616 286h2v3h-2zM616 313h2v3h-2zM616 337h2v3h-2zM616 363h2v3h-2zM616 387h2v3h-2zM616 409h2v3h-2zM621 327h2v4h-2zM610 354h6v8h-4zM622 353h5v1.500h-5z" fill="#e8f0ea"/>

        <g stroke="#b01470"><path d="M405.500 480.500h134.500v18.500h-134.500zM417.500 480v11h-3v8M437 480v11h-3v8M457 480v11h-3v8M477 480v11h-3v8M496 480v11h-3v8M516 480v11h-3v8M427 480v8l2 3v8M447 480v8l2 3v8M467 480v8l-2 3v8M486 480v8l2 3v8M506 480v8l2 3v8M526 480v8l2 3v8M410 487l5-5M420 487l5-5M460 487l5-5M480 487l5-5M500 487l5-5M520 487l5-5"/><path d="M429 486l5-5M429 490l9-9M431 493l12-12M436 493l11-12M441 493l6-6" stroke-width="1.500"/></g>
        <path d="M409 493h4v3h-4zM421 493h3v3h-3zM430 493h3v3h-3zM441 493h4v3h-4zM450 493h4v3h-4zM461 493h4v3h-4zM470 493h4v3h-4zM481 493h3v3h-3zM490 493h3v3h-3zM499 493h4v3h-4zM509 493h4v3h-4zM520 493h4v3h-4zM529 482h4v3h-4zM535 489h4v3h-4zM531 494h3v3h-3z" fill="#f6dcec"/>
        <g fill="#fff" font-family="'Noto Sans CJK SC',sans-serif" font-weight="700" font-size="4"><text x="563" y="495">5单元五层给排水平面图</text><text x="605" y="495">1:80</text></g><path d="M563 497.500h51" stroke="#cfd2d4" stroke-width="1.500"/>

        <g stroke-width="1.300"><path d="M679 235.500h90M692 355.500h75M692 380.500h75M725 429.500h24M753 472.500h40" stroke="#24a42c"/><path d="M686 404h126M682 434h31" stroke="#248c2a" stroke-width="1.800"/>
        <path d="M689 361.500h97" stroke="#a8acae"/>
        <path d="M693 267.500h37.500v45h69" stroke="#a87c4c"/><path d="M693 274.500h30.500v45h76" stroke="#acac2c"/></g><path d="M686 270h3l4-2.500M686 277h3l4-2.500" stroke="#d8d8d8"/>
        <path d="M696.500 422v24M735.500 421v23" stroke="#1414b4" stroke-width="1.300"/><path d="M699.500 464v8.500h20.500" stroke="#acac2c"/>
        <path d="M717 231.500h6v2h-6zM717 262h5.500v2H717zM726 351h5v2h-5zM722 376.500h6v2h-6zM729 376.500h5.500v2H729zM731 400h6v2h-6zM712.500 417h8.500v2h-8.500zM707 460.500h5v2h-5zM768 460.500h6v2h-6z" fill="#e4e8ea"/>

        <path d="M720 488h98M720 496.500h98M720 500.500h78M720 504.500h78M720 508.500h78M720.500 487v26M729.500 496v17M739.500 496v17M747.500 496v17M757.500 496v17M767.500 496v17M799.500 488v25M807.500 488v25" stroke="#eceeef"/>
        <path d="M723 489.500h5v5h-5zM780 490h18v4h-18zM722 498h6v1.500h-6zM722 502h6v1.500h-6zM722 506h6v1.500h-6zM740 498h6v1.500h-6zM740 502h6v1.500h-6zM740 506h6v1.500h-6zM740 510h6v1.500h-6zM759 498h7v1.500h-7zM759 502h7v1.500h-7zM773 497.500h20v2h-20zM779 502h5v1.500h-5zM760 507h5v2h-5zM768 506.500h30v2h-30zM801 490h15v2h-15zM808 493h8v2h-8zM805 499h9v2h-9zM801 505h5v2h-5zM812 505h4v2h-4zM800 509h7v3h-7zM809 509h8v2h-8zM800 514h14v2h-14z" fill="#f4f5f5"/>
        <text x="730" y="494" font-size="4" font-weight="700" fill="#fff" font-family="'Noto Sans CJK SC',sans-serif">中国建筑技术集团有限公司</text>
      </svg>
    </div>
    <div class="laybar d-flex align-items-center">
      <button class="tool" aria-label="第一个"><svg width="6" height="6" viewBox="0 0 6 6"><path d="M1 0v6" stroke="currentColor"/><path d="M5 0v6L2 3z" fill="currentColor"/></svg></button>
      <button class="tool" aria-label="上一个"><svg width="6" height="6" viewBox="0 0 6 6"><path d="M5 0v6L2 3z" fill="currentColor"/></svg></button>
      <button class="tool" aria-label="下一个"><svg width="6" height="6" viewBox="0 0 6 6"><path d="M1 0v6l3-3z" fill="currentColor"/></svg></button>
      <button class="tool" aria-label="最后一个"><svg width="6" height="6" viewBox="0 0 6 6"><path d="M1 0v6l3-3z" fill="currentColor"/><path d="M5 0v6" stroke="currentColor"/></svg></button>
      <a href="#" class="laytab active">模型</a><a href="#" class="laytab pe-1">布局1</a>
      <svg width="24" height="11" viewBox="0 0 24 11"><path d="M1 10.500L5 1M19 10.500 23 1M1 10.500h18" stroke="#b7c3d0" fill="none"/><path d="M10 4v4M8 6h4" stroke="#444"/></svg>
    </div>
  </section>
</main>

<section class="cmd d-flex">
  <div class="cmdgrip d-flex flex-column align-items-center"><svg width="7" height="7"><use href="#ex"/></svg><svg width="6" height="7"><use href="#pin"/></svg></div>
  <div class="flex-grow-1">
    <div class="d-flex">
      <div class="flex-grow-1"><div class="logline">正在打开 AutoCAD 2018 格式的文件.</div><div class="logline">命令:</div><div class="logline">命令:</div></div>
      <div class="sb vsb d-flex flex-column align-items-center justify-content-between py-1"><svg width="6" height="4" viewBox="0 0 6 4"><path d="M1 3.500 3 1l2 2.500" fill="none" stroke="currentColor"/></svg><span class="thumb w-100" style="height:12px"></span><svg width="6" height="4" viewBox="0 0 6 4"><path d="M1 .5 3 3 5 .500" fill="none" stroke="currentColor"/></svg></div>
    </div>
    <div class="cmdin d-flex align-items-center"><label for="cmdline">命令:</label><input id="cmdline" class="flex-grow-1" type="text">
      <div class="sb hsb d-flex align-items-center h-100 px-1"><svg width="4" height="6" viewBox="0 0 4 6"><path d="M3.500 1 1 3l2.500 2" fill="none" stroke="currentColor"/></svg><span class="thumb ms-1 h-100" style="width:10px"></span><svg class="ms-auto" width="4" height="6" viewBox="0 0 4 6"><path d="M.5 1 3 3 .5 5" fill="none" stroke="currentColor"/></svg></div>
    </div>
  </div>
</section>

<footer class="status d-flex align-items-center">
  <div class="txt d-flex align-items-center"><span>比例 1:50</span><i class="dn"></i><span>单位:mm</span><span>487079, -59420, 0</span></div>
  <div class="stools d-flex align-items-center justify-content-between ps-1">
    <button class="tool" aria-label="捕捉"><svg width="10" height="10" viewBox="0 0 10 10"><path d="M2.500 0v9M6.500 0v7M0 2.500h9M0 6.500h7" stroke="#3f4750"/><path d="M7 7h2v2H7z" stroke="#3b6df0" fill="none"/></svg></button>
    <button class="tool" aria-label="栅格"><svg width="10" height="10" viewBox="0 0 10 10"><path d="M2.500 1v8M5 1v8M7.500 1v8M1 2.500h8M1 5h8M1 7.500h8" stroke="#4d5560" stroke-width=".8"/></svg></button>
    <button class="tool" aria-label="正交"><svg width="10" height="10" viewBox="0 0 10 10"><path d="M2.500 1v7.500H9" stroke="#4d5560" fill="none"/></svg></button>
    <button class="tool on" aria-label="极轴"><svg width="10" height="10" viewBox="0 0 10 10"><circle cx="5" cy="5" r="3.500" fill="none" stroke="#4d5560"/><path d="M5 5l4-4M5 5h4" stroke="#4d5560"/></svg></button>
    <button class="tool on" aria-label="对象捕捉"><svg width="10" height="10" viewBox="0 0 10 10"><path d="M1 3h7v6H1z" fill="none" stroke="#8a7440"/><path d="M7 1h2v2H7z" fill="#fff" stroke="#46a"/></svg></button>
    <button class="tool on" aria-label="对象追踪"><svg width="10" height="10" viewBox="0 0 10 10"><path d="M1 9l7-7M1 8.500h8M2 4l3 3" stroke="#555"/></svg></button>
    <button class="tool" aria-label="动态UCS"><svg width="10" height="10" viewBox="0 0 10 10"><path d="M4 1v6M0 4h7M7 3v5M4 6h6" stroke="#4d5560" stroke-width="1.500"/></svg></button>
    <button class="tool on" aria-label="动态输入"><svg width="10" height="10" viewBox="0 0 10 10"><path d="M2 0v5M0 2.500h5" stroke="#555"/><path d="M3.500 4.500H10V9H3.500z" fill="#6b5a33"/></svg></button>
    <button class="tool" aria-label="线宽显示"><svg width="10" height="10" viewBox="0 0 10 10"><path d="M1 1.500h8M1 5h8M1 8.500h8" stroke="#4d5560" stroke-width="1.200"/></svg></button>
    <button class="tool" aria-label="选择循环"><svg width="10" height="10" viewBox="0 0 10 10"><path d="M1 1.500h6" stroke="#3b6df0" stroke-dasharray="1 1"/><path d="M4 3l4 4-2 .5V9z" fill="#3f4750"/></svg></button>
    <button class="tool" aria-label="透明度"><svg width="11" height="11"><use href="#layer"/></svg></button>
    <button class="tool on" aria-label="模型空间"><svg width="10" height="10" viewBox="0 0 10 10"><path d="M3 1h7v5H3z" fill="#4d5560"/><path d="M0 4h7v5H0z" fill="#3858c0"/><path d="M2 6h3" stroke="#fff"/></svg></button>
    <button class="tool"><svg width="9" height="9"><use href="#person"/></svg><span class="me-1">1:1</span><i class="dn"></i></button>
    <button class="tool" aria-label="注释可见性"><svg width="10" height="10" viewBox="0 0 10 10"><use href="#person"/><circle cx="8" cy="2" r="1.500" fill="#f5a623"/></svg></button>
    <button class="tool" aria-label="自动缩放"><svg width="10" height="10" viewBox="0 0 10 10"><use href="#person"/><path d="M6.500 2h3M8 .5v3" stroke="#345"/></svg></button>
    <button class="tool on" aria-label="隔离对象"><svg width="10" height="10" viewBox="0 0 10 10"><path d="M1 1h3v3H1zM6 1h3v3H6zM1 6h3v3H1zM6 6h3v3H6zM4 4h2v2H4z" fill="#6d5c2c"/></svg></button>
    <button class="tool" aria-label="表格"><svg width="10" height="10" viewBox="0 0 10 10"><path d="M1 1h8v8H1zM1 4h8M1 6.500h8M4.500 1v8" fill="none" stroke="#3f4750" stroke-width="1.200"/></svg></button>
    <button class="tool on" aria-label="同步"><svg width="10" height="10" viewBox="0 0 10 10"><path d="M8.500 3A4 4 0 1 0 9 6M9 1v2.500H6.500M3 5h4" fill="none" stroke="#5d5a50"/></svg></button>
  </div>
  <div class="togs d-flex ms-auto">
    <button class="tool tog on">加粗</button><button class="tool tog on">联动</button><button class="tool tog on">打断</button><button class="tool tog">基线</button>
  </div>
  <div class="sright d-flex align-items-center h-100">
    <button class="tool" aria-label="设置"><svg width="9" height="9" viewBox="0 0 10 10"><circle cx="5" cy="5" r="2.700" fill="none" stroke="#3f4750" stroke-width="2"/><path d="M5 0v2M5 8v2M0 5h2M8 5h2M1.500 1.500l1.500 1.500M7 7l1.500 1.500M8.500 1.500 7 3M3 7 1.500 8.500" stroke="#3f4750" stroke-width="1.300"/></svg></button>
    <button class="tool" aria-label="锁定界面"><svg width="9" height="9" style="color:#2f62e8"><use href="#lock"/></svg></button>
    <button class="tool" aria-label="提示"><svg width="8" height="9"><use href="#bulb"/></svg></button>
    <button class="tool" aria-label="查找"><svg width="10" height="10" viewBox="0 0 10 10"><path d="M0 1h6v4H0z" fill="#2f62e8"/><circle cx="6" cy="6" r="2.200" fill="#b8cdf0" stroke="#345"/><path d="M8 8l2 2" stroke="#345"/></svg></button>
    <button class="tool" aria-label="全屏"><svg width="9" height="9" viewBox="0 0 9 9"><path d="M.5.500h8v8h-8zM2.500 6.500l4-4" fill="none" stroke="#466085"/></svg></button>
    <span class="brandname ms-auto">GstarCAD</span>
  </div>
</footer>
<div class="desk-bottom"></div>

<div class="caption position-absolute">管线绘制模块</div>

<script src="https://cdn.jsdelivr.net/npm/bootstrap@5.3.0/dist/js/bootstrap.bundle.min.js"></script>
</body>
</html>
